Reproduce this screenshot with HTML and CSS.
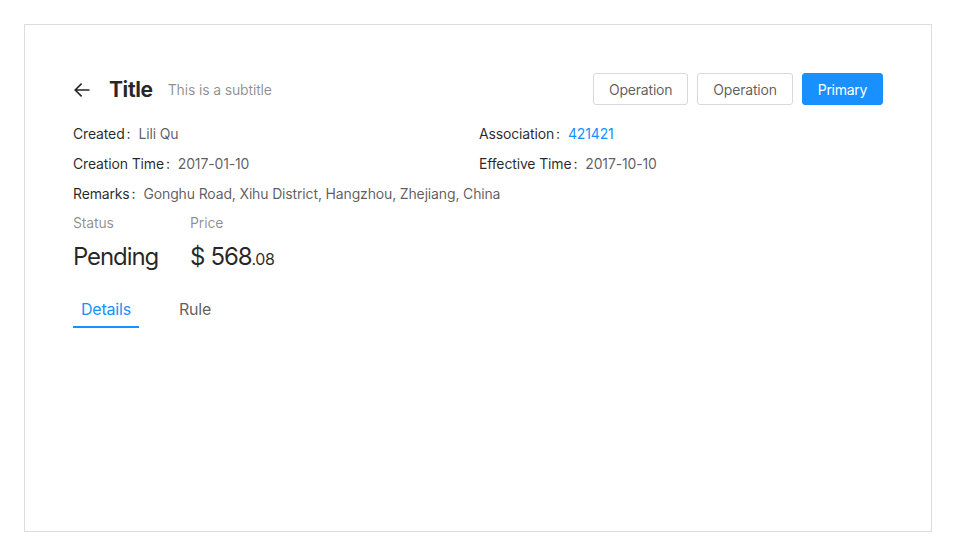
FILE: index.html
```html
<!DOCTYPE html>
<html>
<head>
<meta charset="utf-8">
<link rel="stylesheet" href="styles.css">
</head>
<body>
<div class="card">
  <div class="heading">
    <div class="heading-left">
      <span class="back">
        <svg width="18" height="18" viewBox="0 0 18 18"><path d="M16.5 9H2.2M8.6 2.6 2.2 9l6.4 6.4" fill="none" stroke="#262626" stroke-width="1.6" stroke-linejoin="miter"/></svg>
      </span>
      <span class="title">Title</span>
      <span class="subtitle">This is a subtitle</span>
    </div>
    <div class="extra">
      <button class="btn">Operation</button>
      <button class="btn">Operation</button>
      <button class="btn btn-primary">Primary</button>
    </div>
  </div>
  <div class="desc">
    <div class="item"><span class="label">Created</span><span class="value">Lili Qu</span></div>
    <div class="item"><span class="label">Association</span><a class="value link">421421</a></div>
    <div class="item"><span class="label">Creation Time</span><span class="value">2017-01-10</span></div>
    <div class="item"><span class="label">Effective Time</span><span class="value">2017-10-10</span></div>
    <div class="item full"><span class="label">Remarks</span><span class="value">Gonghu Road, Xihu District, Hangzhou, Zhejiang, China</span></div>
  </div>
  <div class="stats">
    <div class="stat">
      <div class="stat-title">Status</div>
      <div class="stat-value">Pending</div>
    </div>
    <div class="stat">
      <div class="stat-title">Price</div>
      <div class="stat-value"><span class="prefix">$</span>568<span class="decimal">.08</span></div>
    </div>
  </div>
  <div class="tabs">
    <div class="tab active">Details</div>
    <div class="tab">Rule</div>
  </div>
</div>
</body>
</html>
```
FILE: styles.css
```css
* { box-sizing: border-box; }
body {
  margin: 0;
  font-family: Inter, "Noto Sans", sans-serif;
  font-size: 14px;
  letter-spacing: -0.15px;
  color: rgba(0,0,0,.85);
  background: #fff;
}
.card {
  margin: 24px;
  width: 908px;
  height: 508px;
  border: 1px solid #dcdcdc;
  padding: 48px 48px 0 48px;
}
.heading {
  display: flex;
  justify-content: space-between;
  align-items: center;
  height: 32px;
}
.heading-left {
  display: flex;
  align-items: center;
  padding-top: 1px;
}
.back {
  display: flex;
  width: 18px;
  height: 18px;
  margin-right: 18px;
}
.title {
  font-size: 21px;
  font-weight: 700;
  letter-spacing: -0.4px;
  color: rgba(0,0,0,.85);
  line-height: 32px;
  margin-right: 15px;
}
.subtitle {
  font-size: 14px;
  color: rgba(0,0,0,.45);
  line-height: 22px;
}
.extra {
  display: flex;
  gap: 9px;
}
.btn {
  font-family: inherit;
  font-size: 14px;
  letter-spacing: -0.2px;
  height: 32px;
  padding: 5px 15px 3px;
  border: 1px solid #d9d9d9;
  border-radius: 3px;
  background: #fff;
  color: rgba(0,0,0,.65);
  line-height: 22px;
}
.btn-primary {
  background: #1890ff;
  border-color: #1890ff;
  color: #fff;
  letter-spacing: -0.3px;
}
.desc {
  margin-top: 18px;
  display: grid;
  grid-template-columns: 406px 1fr;
}
.item {
  display: flex;
  line-height: 22px;
  padding-bottom: 8px;
  font-size: 14px;
}
.item.full { grid-column: 1 / span 2; }
.label {
  color: rgba(0,0,0,.85);
}
.label::after {
  content: ":";
  margin: 0 8px 0 2px;
}
.value {
  color: rgba(0,0,0,.65);
}
.link {
  color: #1890ff;
}
.stats {
  display: flex;
  gap: 32px;
  margin-top: -1px;
}
.stat-title {
  color: rgba(0,0,0,.45);
  font-size: 14px;
  line-height: 22px;
  margin-bottom: 4px;
}
.stat-value {
  font-size: 24px;
  letter-spacing: -1.1px;
  line-height: 38px;
  color: rgba(0,0,0,.85);
}
.prefix { margin-right: 6px; }
.decimal { font-size: 16px; letter-spacing: -0.3px; }
.tabs {
  display: flex;
  gap: 32px;
  margin-top: 16px;
}
.tab {
  position: relative;
  font-size: 16px;
  letter-spacing: -0.2px;
  line-height: 24px;
  padding: 3px 8px 7px;
  color: rgba(0,0,0,.65);
}
.tab.active {
  color: #1890ff;
}
.tab.active::after {
  content: "";
  position: absolute;
  left: 0;
  right: 0;
  bottom: 0;
  height: 2px;
  background: #1890ff;
}
```
